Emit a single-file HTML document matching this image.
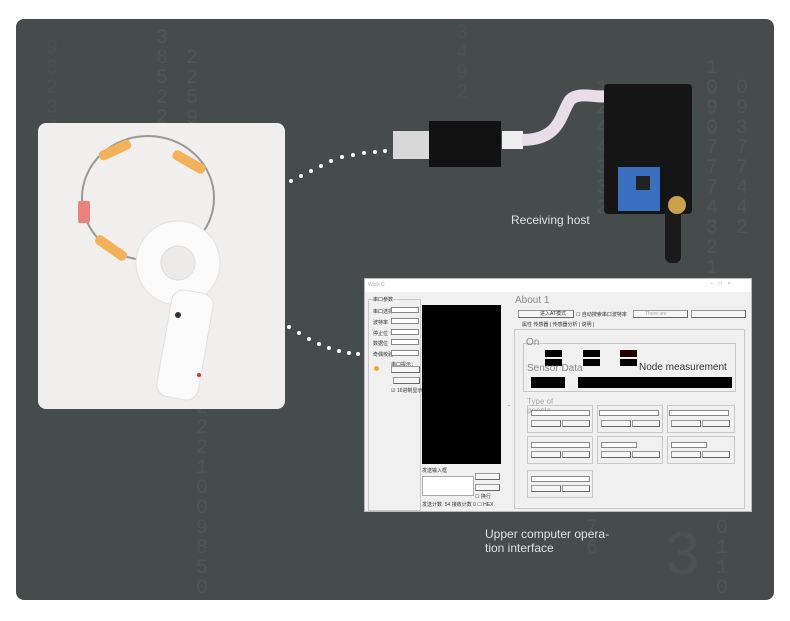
<!DOCTYPE html>
<html><head><meta charset="utf-8"><style>
*{margin:0;padding:0;box-sizing:border-box}
body{width:790px;height:621px;background:#fff;position:relative;overflow:hidden;font-family:"Liberation Sans","Noto Sans CJK SC",sans-serif}
.panel{position:absolute;left:16px;top:19px;width:758px;height:581px;background:#464c4b;border-radius:8px;overflow:hidden}
.mx{position:absolute;color:#6a7d70;font-family:"Liberation Mono",monospace;font-size:20px;line-height:20px;width:14px;word-break:break-all;opacity:.22}
.card{position:absolute;left:38px;top:123px;width:247px;height:286px;background:#f1efee;border-radius:8px}
.lbl{position:absolute;color:#dfe2e1;font-size:12px}
.win{position:absolute;left:364px;top:278px;width:388px;height:234px;background:#f0f0f0;border:1px solid #bbb}
.b{position:absolute;background:#000}
.gb{position:absolute;border:1px solid #c8c8c8}
.t{position:absolute;font-size:5px;color:#333;white-space:nowrap}
.btn{position:absolute;background:#f6f6f6;border:1px solid #999;border-right-color:#666;border-bottom-color:#666;height:7px}
.inp{position:absolute;background:#fff;border:1px solid #888;height:6px}
.g{position:absolute;color:#888;white-space:nowrap}
</style></head><body>
<div class="panel">
<div class="mx" style="left:140px;top:10px">3852241735</div>
<div class="mx" style="left:170px;top:30px">2259017640</div>
<div class="mx" style="left:180px;top:380px">2221009850</div>
<div class="mx" style="left:30px;top:20px;opacity:.12">98237</div>
<div class="mx" style="left:690px;top:40px">10907774321</div>
<div class="mx" style="left:720px;top:60px">09377442</div>
<div class="mx" style="left:570px;top:480px">876</div>
<div class="mx" style="left:700px;top:500px">0110</div>
<div class="mx" style="left:580px;top:60px">1244332</div>
<div class="mx" style="left:440px;top:5px;opacity:.12">3492</div>
<div style="position:absolute;left:650px;top:500px;font-size:60px;color:#55605a;opacity:.4">3</div>
</div>
<div class="card">
<svg width="247" height="286" viewBox="0 0 247 286">
<ellipse cx="110" cy="75" rx="66" ry="62" fill="none" stroke="#999" stroke-width="2"/>
<rect x="60" y="22" width="34" height="10" rx="4" fill="#f3b25a" transform="rotate(-25 77 27)"/>
<rect x="133" y="34" width="36" height="10" rx="4" fill="#f3b25a" transform="rotate(30 151 39)"/>
<rect x="40" y="78" width="12" height="22" rx="2" fill="#e9837c"/>
<rect x="55" y="120" width="36" height="10" rx="4" fill="#f3b25a" transform="rotate(35 73 125)"/>
<circle cx="140" cy="140" r="42" fill="#fafafa" stroke="#e2e2e2"/>
<circle cx="140" cy="140" r="17" fill="#ecebea" stroke="#ddd"/>
<rect x="126" y="168" width="42" height="108" rx="12" fill="#fafafa" stroke="#e0e0e0" transform="rotate(10 147 222)"/>
<circle cx="140" cy="192" r="3" fill="#333"/>
<circle cx="161" cy="252" r="2" fill="#d33"/>
</svg>
</div>
<svg style="position:absolute;left:0;top:0" width="790" height="621">
<g fill="#fff"><circle cx="291" cy="181" r="2"/><circle cx="301" cy="176" r="2"/><circle cx="311" cy="171" r="2"/><circle cx="321" cy="166" r="2"/><circle cx="331" cy="161" r="2"/><circle cx="342" cy="157" r="2"/><circle cx="353" cy="155" r="2"/><circle cx="364" cy="153" r="2"/><circle cx="375" cy="152" r="2"/><circle cx="385" cy="151" r="2"/>
<circle cx="289" cy="327" r="2"/><circle cx="299" cy="333" r="2"/><circle cx="309" cy="339" r="2"/><circle cx="319" cy="344" r="2"/><circle cx="329" cy="348" r="2"/><circle cx="339" cy="351" r="2"/><circle cx="349" cy="353" r="2"/><circle cx="358" cy="354" r="2"/></g>
<rect x="393" y="131" width="40" height="28" fill="#d8d8d8"/>
<rect x="429" y="121" width="72" height="46" fill="#111"/>
<rect x="502" y="131" width="21" height="18" fill="#eee"/>
<path d="M522 140 C560 140 560 115 570 100 C580 90 600 100 610 95 L620 130" stroke="#e8dde8" stroke-width="12" fill="none"/>
<rect x="604" y="84" width="88" height="130" rx="4" fill="#151515"/>
<rect x="618" y="167" width="42" height="44" fill="#3a6fc0"/>
<rect x="636" y="176" width="14" height="14" fill="#222"/>
<rect x="665" y="205" width="16" height="58" rx="6" fill="#1a1a1a"/>
<circle cx="677" cy="205" r="9" fill="#c9a24a"/>
</svg>
<div class="lbl" style="left:511px;top:213px">Receiving host</div>
<div class="lbl" style="left:485px;top:527px;line-height:14px">Upper computer opera-<br>tion interface</div>
<div class="win">
<div style="position:absolute;left:0;top:0;width:386px;height:13px;background:#fff"></div>
<div class="t" style="left:3px;top:3px;color:#aaa">Work C</div>
<div class="t" style="left:345px;top:2px;color:#999;letter-spacing:6px">–□×</div>
<div class="gb" style="left:3px;top:20px;width:53px;height:212px"></div>
<div class="t" style="left:8px;top:17px;background:#f0f0f0">串口参数</div>
<div class="t" style="left:8px;top:29px">串口选择</div><div class="inp" style="left:26px;top:28px;width:28px"></div>
<div class="t" style="left:8px;top:40px">波特率</div><div class="inp" style="left:26px;top:39px;width:28px"></div>
<div class="t" style="left:8px;top:51px">停止位</div><div class="inp" style="left:26px;top:50px;width:28px"></div>
<div class="t" style="left:8px;top:61px">数据位</div><div class="inp" style="left:26px;top:60px;width:28px"></div>
<div class="t" style="left:8px;top:72px">奇偶校验</div><div class="inp" style="left:26px;top:71px;width:28px"></div>
<div class="t" style="left:26px;top:82px">串口提示：</div>
<div style="position:absolute;left:9px;top:87px;width:5px;height:5px;border-radius:50%;background:#f5a623"></div>
<div class="btn" style="left:26px;top:87px;width:29px"></div>
<div class="btn" style="left:28px;top:98px;width:27px"></div>
<div class="t" style="left:26px;top:108px">☑ 16进制显示</div>
<div class="b" style="left:57px;top:26px;width:79px;height:159px"></div>
<div class="t" style="left:57px;top:188px">发送输入框</div>
<div style="position:absolute;left:57px;top:197px;width:52px;height:20px;background:#fff;border:1px solid #aaa"></div>
<div class="btn" style="left:110px;top:194px;width:25px"></div>
<div class="btn" style="left:110px;top:205px;width:25px"></div>
<div class="t" style="left:110px;top:214px">☐ 换行</div>
<div class="t" style="left:57px;top:222px">发送计数 &nbsp;54 接收计数 0 ☐ HEX</div>
<div class="t" style="left:143px;top:124px">-</div>
<div class="g" style="left:150px;top:16px;font-size:10px">About 1</div>
<div class="btn" style="left:153px;top:31px;width:56px;height:8px"></div>
<div class="t" style="left:175px;top:31px">进入AT模式</div>
<div class="t" style="left:211px;top:32px">☐ 自动搜索串口波特率</div>
<div class="btn" style="left:268px;top:31px;width:55px;height:8px"></div><div class="t" style="left:280px;top:32px;color:#aaa">There are</div>
<div class="btn" style="left:326px;top:31px;width:55px;height:8px"></div>
<div class="t" style="left:157px;top:42px">属性 传感器 | 传感器分析 | 说明 |</div>
<div class="gb" style="left:149px;top:50px;width:231px;height:180px"></div>
<div class="gb" style="left:158px;top:64px;width:213px;height:49px"></div>
<div class="g" style="left:161px;top:58px;font-size:10px">On</div>
<div class="b" style="left:180px;top:71px;width:17px;height:7px"></div>
<div class="b" style="left:218px;top:71px;width:17px;height:7px"></div>
<div class="b" style="left:255px;top:71px;width:17px;height:7px;background:#200"></div>
<div class="b" style="left:180px;top:80px;width:17px;height:7px"></div>
<div class="b" style="left:218px;top:80px;width:17px;height:7px"></div>
<div class="b" style="left:255px;top:80px;width:17px;height:7px"></div>
<div class="g" style="left:162px;top:84px;font-size:10px">Sensor Data</div>
<div class="g" style="left:274px;top:83px;font-size:10px;color:#333">Node measurement</div>
<div class="b" style="left:166px;top:98px;width:34px;height:11px"></div>
<div class="b" style="left:213px;top:98px;width:154px;height:11px"></div>
<div class="gb" style="left:162px;top:126px;width:66px;height:28px"></div>
<div class="gb" style="left:232px;top:126px;width:66px;height:28px"></div>
<div class="gb" style="left:302px;top:126px;width:68px;height:28px"></div>
<div class="gb" style="left:162px;top:157px;width:66px;height:28px"></div>
<div class="gb" style="left:232px;top:157px;width:66px;height:28px"></div>
<div class="gb" style="left:302px;top:157px;width:68px;height:28px"></div>
<div class="gb" style="left:162px;top:191px;width:66px;height:28px"></div>
<div class="g" style="left:162px;top:118px;font-size:8px;color:#aaa;line-height:9px">Type of<br>people</div>
<div class="inp" style="left:234px;top:131px;width:60px"></div><div class="inp" style="left:304px;top:131px;width:60px"></div><div class="inp" style="left:166px;top:131px;width:59px"></div>
<div class="inp" style="left:166px;top:163px;width:59px"></div><div class="inp" style="left:236px;top:163px;width:36px"></div><div class="inp" style="left:306px;top:163px;width:36px"></div>
<div class="inp" style="left:166px;top:197px;width:59px"></div>
<div class="btn" style="left:166px;top:141px;width:30px"></div><div class="btn" style="left:197px;top:141px;width:28px"></div>
<div class="btn" style="left:236px;top:141px;width:30px"></div><div class="btn" style="left:267px;top:141px;width:28px"></div>
<div class="btn" style="left:306px;top:141px;width:30px"></div><div class="btn" style="left:337px;top:141px;width:28px"></div>
<div class="btn" style="left:166px;top:172px;width:30px"></div><div class="btn" style="left:197px;top:172px;width:28px"></div>
<div class="btn" style="left:236px;top:172px;width:30px"></div><div class="btn" style="left:267px;top:172px;width:28px"></div>
<div class="btn" style="left:306px;top:172px;width:30px"></div><div class="btn" style="left:337px;top:172px;width:28px"></div>
<div class="btn" style="left:166px;top:206px;width:30px"></div><div class="btn" style="left:197px;top:206px;width:28px"></div>
</div>
</body></html>
